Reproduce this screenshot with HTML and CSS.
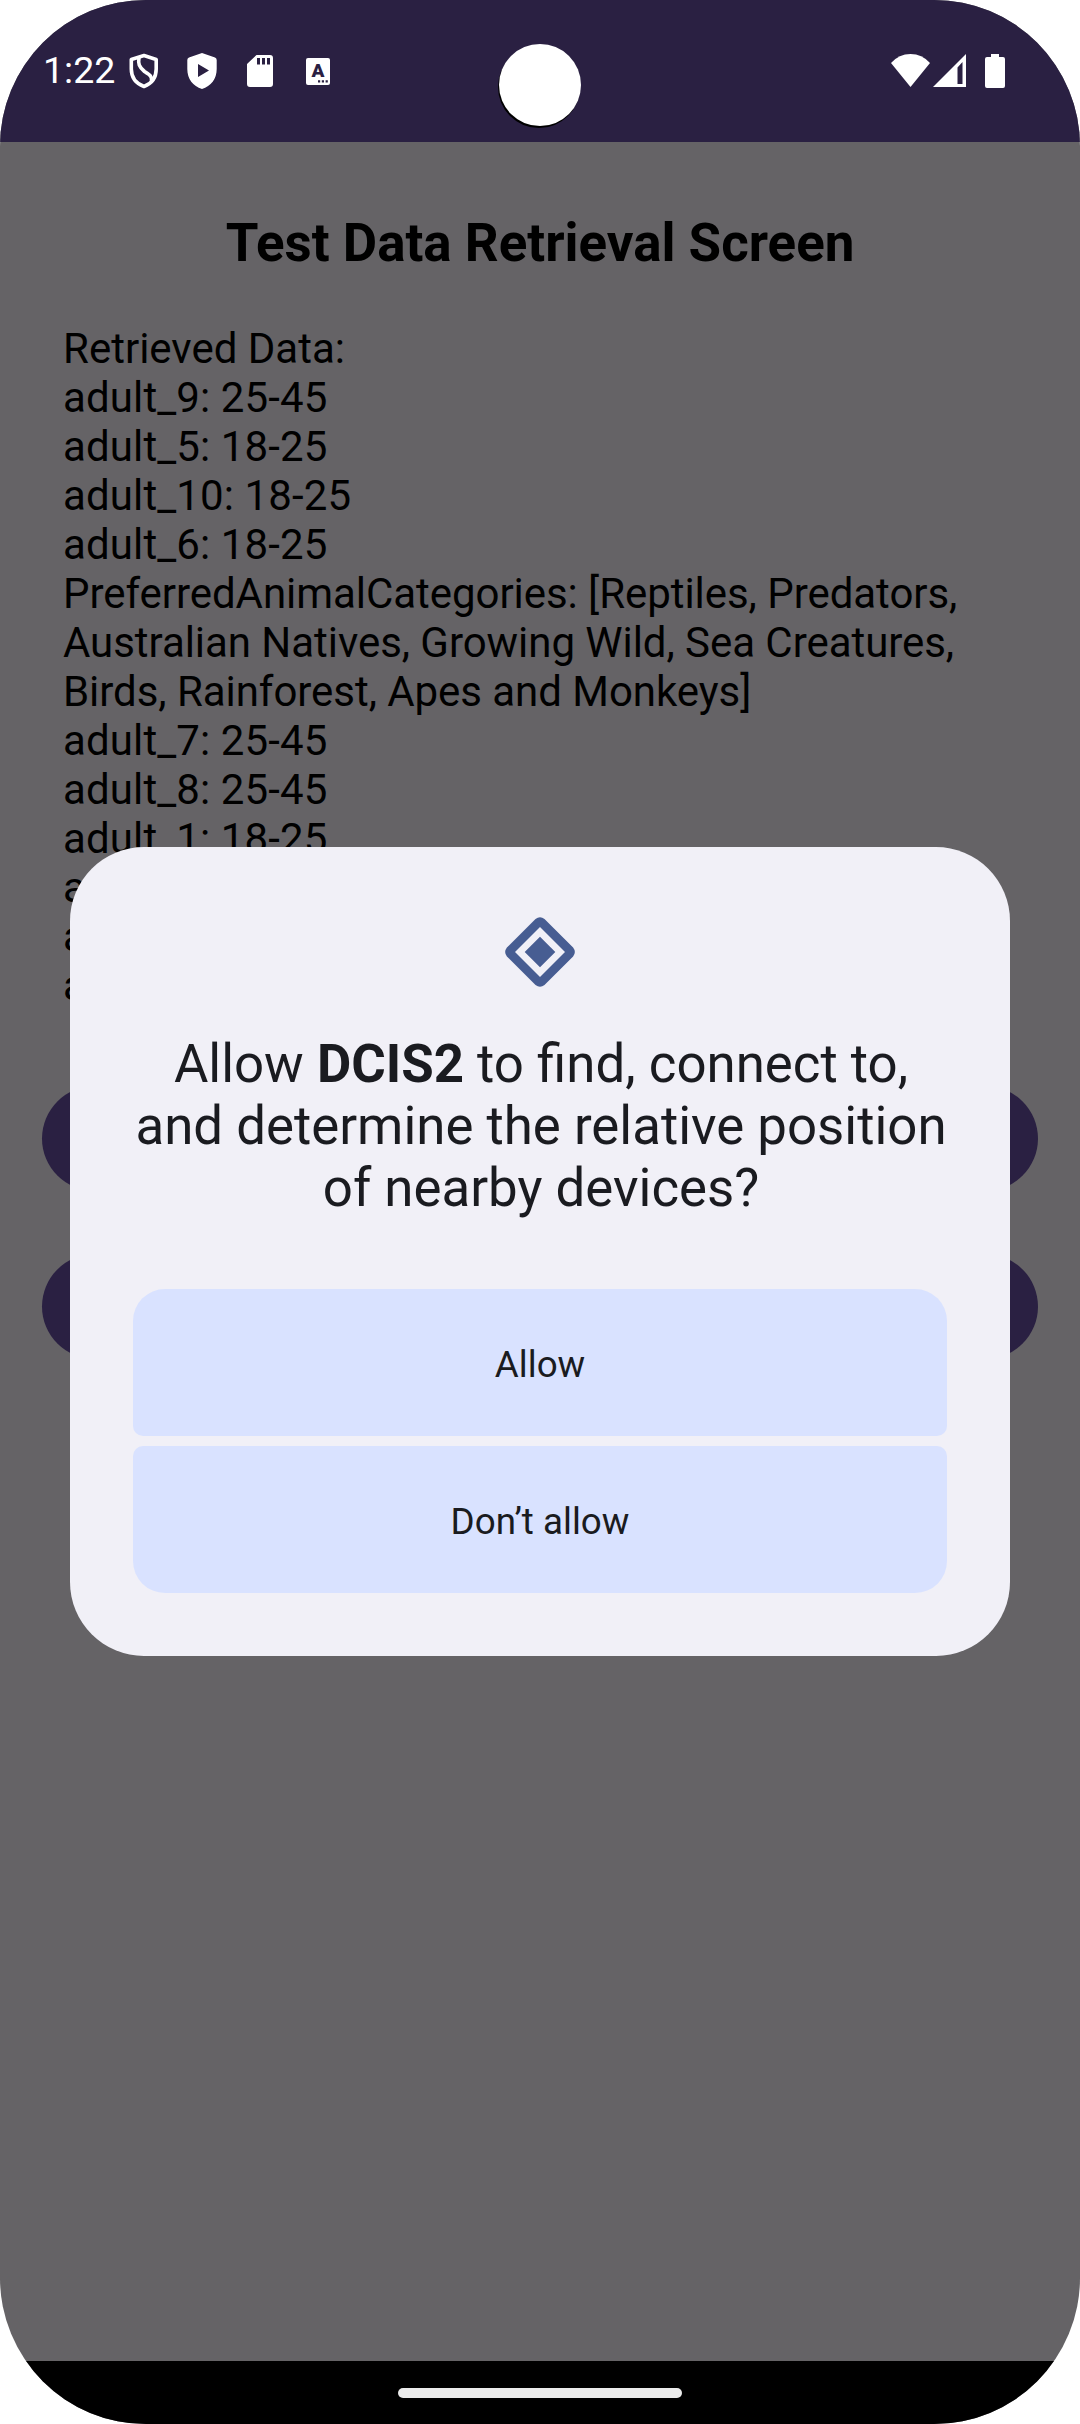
FILE: index.html
```html
<!DOCTYPE html>
<html lang="en">
<head>
<meta charset="utf-8">
<title>Test Data Retrieval</title>
<link rel="stylesheet" href="styles.css">
</head>
<body>
<div class="phone">
  <header class="status">
    <div class="status-left">
      <span class="clock">1:22</span>
      <svg class="icon-shield" width="30" height="36" viewBox="0 0 30 36"><path d="M15 2.500 L27.200 6.500 V16 C27.200 24 23 30.500 15 33.500 C7 30.500 2.300 24 2.300 16 V6.500 Z" fill="none" stroke="#fff" stroke-width="3.600" stroke-linejoin="round"/><path d="M10 4 C9 11 10 14 15.500 18.500 C21 22 23 23 22.500 28" fill="none" stroke="#fff" stroke-width="3.600"/></svg>
      <svg class="icon-play" width="30" height="36" viewBox="0 0 30 36"><path fill-rule="evenodd" fill="#fff" d="M15 0 L28 4.500 Q29.700 5.200 29.700 7 V16 C29.700 26 24 33 15 36 C6 33 .3 26 .3 16 V7 Q.3 5.200 2 4.500 Z M11 11 V24 L22 17.500 Z"/></svg>
      <svg class="icon-sd" width="26" height="32" viewBox="0 0 26 32"><path fill-rule="evenodd" fill="#fff" d="M9.500 0 H23 Q26 0 26 3 V29 Q26 32 23 32 H3 Q0 32 0 29 V9 Z M10 3 V9.500 H13 V3 Z M15 3 V9.500 H18 V3 Z M20 3 V9.500 H23 V3 Z"/></svg>
      <span class="icon-lang">A<svg width="10" height="3" viewBox="0 0 10 3"><path fill="#2a2042" d="M0 .3h2.200v2.200H0zM3.800 .3H6v2.200H3.800zM7.600 .3h2.200v2.200H7.600z"/></svg></span>
    </div>
    <div class="status-right">
      <svg width="39" height="33" viewBox="0 0 39 33"><path fill="#fff" d="M0 9 Q8 0 19.500 0 Q31 0 39 9 L19.500 33 Z"/></svg>
      <svg class="icon-signal" width="33" height="33" viewBox="0 0 33 33"><path fill="#fff" fill-rule="evenodd" d="M33 0 V33 H0 Z M29.500 8 L24.500 13.500 V30 H29.500 Z"/></svg>
      <svg class="icon-battery" width="20" height="34" viewBox="0 0 20 34"><path fill="#fff" d="M6 0 H14 V3 H18 Q20 3 20 5 V32 Q20 34 18 34 H2 Q0 34 0 32 V5 Q0 3 2 3 H6 Z"/></svg>
    </div>
    <span class="camera"></span>
  </header>

  <main class="screen">
    <h1 class="title">Test Data Retrieval Screen</h1>
    <div class="data">
      <p>Retrieved Data:</p>
      <p class="entry">adult_9: 25-45</p>
      <p class="entry">adult_5: 18-25</p>
      <p class="entry">adult_10: 18-25</p>
      <p class="entry">adult_6: 18-25</p>
      <p class="categories">PreferredAnimalCategories: [Reptiles, Predators, Australian Natives, Growing Wild, Sea Creatures, Birds, Rainforest, Apes and Monkeys]</p>
      <p class="entry">adult_7: 25-45</p>
      <p class="entry">adult_8: 25-45</p>
      <p class="entry">adult_1: 18-25</p>
      <p>a</p>
      <p>a</p>
      <p>a</p>
    </div>
    <div class="pills">
      <div class="pill"></div>
      <div class="pill"></div>
    </div>
  </main>

  <nav class="nav"><span class="handle"></span></nav>

  <section class="dialog" role="dialog">
    <svg class="dialog-icon" width="70" height="70" viewBox="0 0 70 70"><path fill="#475d92" fill-rule="evenodd" d="M30.500 1.900 Q35 -1.600 39.500 1.900 L68.100 30.500 Q71.600 35 68.100 39.500 L39.500 68.100 Q35 71.600 30.500 68.100 L1.900 39.500 Q-1.600 35 1.900 30.500 Z M35 10 L10 35 L35 60 L60 35 Z M35 19.700 L50.300 35 L35 50.300 L19.700 35 Z"/></svg>
    <p class="question">Allow <b>DCIS2</b> to find, connect to,<br>and determine the relative position<br>of nearby devices?</p>
    <div class="actions">
      <button class="action first">Allow</button>
      <button class="action last">Don’t allow</button>
    </div>
  </section>
</div>
</body>
</html>
```
FILE: styles.css
```css
* { box-sizing: border-box; }
body { margin: 0; background: #fff; font-family: Roboto, sans-serif; }
h1, p { margin: 0; font-weight: 400; }
.phone {
  position: relative;
  display: flex;
  flex-direction: column;
  width: 1080px;
  height: 2424px;
  border-radius: 146px;
  overflow: hidden;
  background: #656366;
}
.status {
  position: relative;
  display: flex;
  justify-content: space-between;
  align-items: flex-start;
  height: 142px;
  padding: 53px 75px 0 43px;
  background: #2a2042;
}
.status-left, .status-right { display: flex; align-items: flex-start; }
.status-left { height: 36px; align-items: center; }
.clock { width: 86px; padding-bottom: 2px; font-size: 37.5px; line-height: 34px; color: #fff; white-space: nowrap; }
.icon-play { margin-left: 28px; }
.icon-sd { margin-left: 30px; }
.icon-lang {
  display: grid;
  grid-template-rows: 21px 3px;
  justify-items: center;
  width: 24px;
  height: 27px;
  margin-left: 33px;
  border-radius: 2px;
  background: #fff;
  color: #2a2042;
  font-size: 19px;
  font-weight: 900;
  line-height: 25px;
}
.icon-lang svg { display: block; justify-self: end; margin: 1px 2px 0 0; }
.status-right { padding-top: 1px; }
.icon-signal { margin-left: 3px; }
.icon-battery { margin-left: 19px; }
.camera {
  position: absolute;
  left: 499px;
  top: 44px;
  width: 82px;
  height: 82px;
  border-radius: 50%;
  background: #fff;
  box-shadow: -1px 2px 0 #000;
}
.screen { flex: 1; padding: 70px 42px 0; color: #000; }
.title { font-size: 52.9px; line-height: 62px; font-weight: 700; text-align: center; }
.data { padding: 50px 21px 0; font-size: 42px; line-height: 49px; }
.entry { letter-spacing: 0.12px; }
.categories { letter-spacing: -0.05px; }
.pills { display: grid; gap: 63px; margin-top: 76px; }
.pill { height: 105px; border-radius: 53px; background: #2a2042; }
.nav {
  display: flex;
  justify-content: center;
  height: 63px;
  padding-top: 27px;
  background: #000;
}
.handle { width: 284px; height: 10px; border-radius: 5px; background: #ebebeb; }
.dialog {
  position: absolute;
  left: 70px;
  top: 847px;
  display: flex;
  flex-direction: column;
  align-items: center;
  width: 940px;
  height: 809px;
  padding: 70px 63px 63px;
  border-radius: 74px;
  background: #f1f0f7;
  color: #1a1b20;
}
.dialog-icon { display: block; }
.question { margin-top: 46px; padding-left: 2px; font-size: 52.8px; line-height: 62px; text-align: center; white-space: nowrap; }
.question b { font-weight: 700; }
.actions { display: grid; gap: 10px; width: 100%; margin-top: auto; }
.action {
  height: 147px;
  padding: 4px 0 0;
  border: 0;
  border-radius: 10px;
  background: #d9e2ff;
  color: #1a1b20;
  font: 400 36.75px Roboto, sans-serif;
}
.first { border-top-left-radius: 32px; border-top-right-radius: 32px; }
.last { border-bottom-left-radius: 32px; border-bottom-right-radius: 32px; }
```
